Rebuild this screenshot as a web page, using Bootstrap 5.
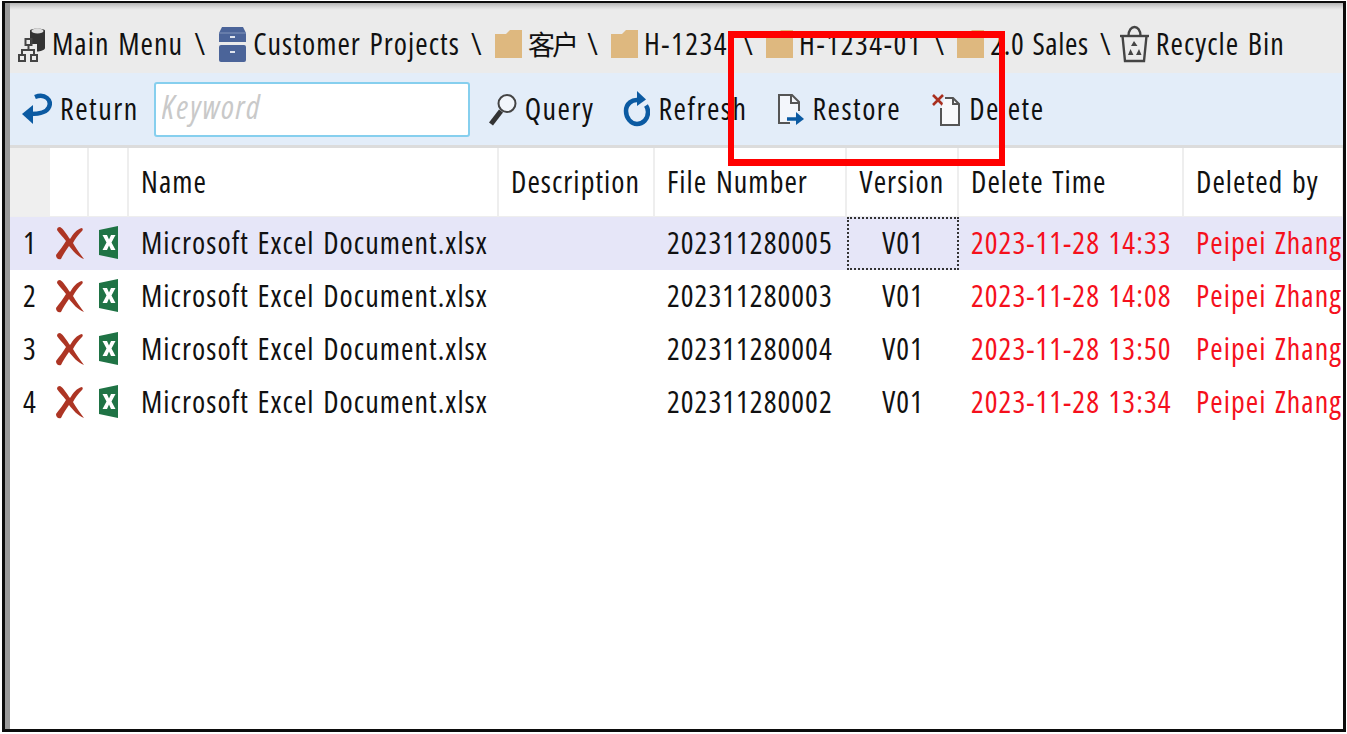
<!doctype html>
<html lang="en"><head><meta charset="utf-8"><title>Recycle Bin</title>
<link href="https://cdn.jsdelivr.net/npm/bootstrap@5.3.0/dist/css/bootstrap.min.css" rel="stylesheet">
<style>
html,body{height:100%;overflow:hidden;background:#fff}
body{font-family:"Open Sans","Noto Sans CJK SC",sans-serif;font-stretch:75%;font-size:30px;letter-spacing:1.05px;word-spacing:2px;color:#111;line-height:1}
.shell{position:relative;margin:1px 1px 2px 2px;height:731px;border:solid #0c0c0c;border-width:2px 3px 3px 3px;display:flex;flex-direction:column;overflow:hidden}
.inner{flex:1;border-left:5px solid;border-image:linear-gradient(90deg,#9a9a9a,#f0f0f0) 1;display:flex;flex-direction:column;min-height:0}
.crumbs{height:70px;flex:none;background:linear-gradient(180deg,#b5b5b5 0,#d8d8d8 4px,#ebebeb 7px);padding:22px 0 0 8px}
.crumbs .breadcrumb{--bs-breadcrumb-divider:"\\";--bs-breadcrumb-margin-bottom:0;--bs-breadcrumb-item-padding-x:11px;--bs-breadcrumb-divider-color:#111;--bs-breadcrumb-item-active-color:#111;flex-wrap:nowrap;align-items:center}
.crumbs .breadcrumb-item{display:flex;align-items:center;gap:6px;white-space:nowrap}
.crumbs .breadcrumb-item+.breadcrumb-item::before{padding-right:6px;font-size:30px}
.crumbs .breadcrumb-item:last-child::before{padding-right:1px}
.hanzi{font-size:27px;letter-spacing:-3px}
.wide-a{letter-spacing:1.5px;margin-right:3px}
.wide-b{letter-spacing:1.6px}
.tight-a{letter-spacing:.6px}
.tools{height:75px;flex:none;background:#e3edf9;border-bottom:3px solid #dcdcdc;padding-left:12px;gap:18px}
.tbtn{background:none;border:0;padding:0;color:#111;font-size:30px;font-stretch:75%;letter-spacing:1.5px;display:flex;align-items:center;gap:8px;line-height:1}
.kw{width:316px;height:55px;flex:none;margin-left:-3px;border:2px solid #86cfee;border-radius:3px;font-size:32px;font-stretch:75%;letter-spacing:1.7px;font-style:italic;padding:0 6px 6px;background:#fff}
.kw::placeholder{color:#c9c9c9;opacity:1}
.kw:focus{outline:0;box-shadow:none;border-color:#86cfee}
.push-a{margin-left:11px}
.push-b{margin-left:12px}
.push-c{margin-left:12px}
.grid{table-layout:fixed;width:1334px;margin:0;--bs-table-bg:transparent;--bs-table-color:#111;border-collapse:separate;border-spacing:0}
.grid th,.grid td{padding:0 0 0 12px;vertical-align:middle;font-weight:400;white-space:nowrap;overflow:hidden;height:53px;border:0}
.grid td{padding-bottom:2px}
.grid thead th{height:69px;border-right:2px solid #eeeeee;border-bottom:1px solid #eeeeee}
.grid thead th:first-child{background:#efefef;border-right:0}
.grid th.mid{text-align:center;padding:0}
.grid td.mid{text-align:center;padding:0 0 2px}
.grid td.ico{padding:0 0 0 5px}
.grid td.ico2{padding:0 0 2px 10px}
.grid .gone{color:#f5101c}
.grid tr.picked td{background:#e6e6f8}
.grid td.cur{outline:2px dotted #333;outline-offset:-2px}
.mark-box{position:absolute;left:723px;top:28px;width:277px;height:135px;border:solid #f00;border-width:7px 6px;pointer-events:none}
svg{display:block;flex:none}
</style></head><body>
<div class="shell"><div class="inner">
<nav class="crumbs" aria-label="path"><ol class="breadcrumb">
<li class="breadcrumb-item"><svg width="28" height="35" viewBox="0 0 28 35"><path d="M12 3.500C12 1 27 1 27 3.500V21C27 23 22 24.500 19 24.500V17H12Z" fill="#333"/><ellipse cx="19.500" cy="4" rx="6" ry="2.500" fill="#ddd"/><g fill="none" stroke="#444" stroke-width="2"><rect x="7.500" y="12" width="6" height="6"/><rect x="1" y="28" width="6" height="6"/><rect x="13" y="28" width="6" height="6"/><path d="M10.500 18V23M4 28V23H16V28"/></g></svg><span>Main Menu</span></li>
<li class="breadcrumb-item"><svg width="29" height="35" viewBox="0 0 29 35"><path d="M4 0H25L28 6V15H1V6Z" fill="#4b6499"/><rect x="1" y="18" width="27" height="17" rx="2" fill="#4b6499"/><path d="M1 6H28" stroke="#8395bb"/><rect x="12" y="9" width="5" height="2" fill="#dfe4ee"/><rect x="12" y="24" width="5" height="2" fill="#dfe4ee"/></svg><span>Customer Projects</span></li>
<li class="breadcrumb-item"><svg width="27" height="28" viewBox="0 0 27 28"><use href="#folder"/></svg><span class="hanzi">客户</span></li>
<li class="breadcrumb-item"><svg width="27" height="28" viewBox="0 0 27 28"><use href="#folder"/></svg><span class="wide-a">H-1234</span></li>
<li class="breadcrumb-item"><svg width="27" height="28" viewBox="0 0 27 28"><use href="#folder"/></svg><span class="wide-b">H-1234-01</span></li>
<li class="breadcrumb-item"><svg width="27" height="28" viewBox="0 0 27 28"><use href="#folder"/></svg><span class="tight-a">2.0 Sales</span></li>
<li class="breadcrumb-item"><svg width="31" height="38" viewBox="0 0 31 38"><g fill="none" stroke="#444" stroke-width="2.400"><path d="M1 11H30"/><path d="M3.500 11L6 36H25L27.500 11"/><path d="M9.500 11C9.500 -1 21.500 -1 21.500 11"/></g><path d="M15 16L18.500 21H12ZM20 24L22.500 30H17ZM9 30L11.500 24L14.500 30Z" fill="#444"/></svg><span>Recycle Bin</span></li>
</ol></nav>
<div class="tools d-flex align-items-center">
<button class="tbtn" type="button"><svg width="30" height="32" viewBox="0 0 30 32"><path d="M13 4C23 0 30 7 27 14C25 19 18 21 8 21" fill="none" stroke="#0b5aa2" stroke-width="4.500"/><path d="M0 21L11 12V31Z" fill="#0b5aa2"/></svg><span>Return</span></button>
<input class="form-control kw" type="text" placeholder="Keyword" aria-label="Keyword">
<button class="tbtn" type="button"><svg width="29" height="33" viewBox="0 0 29 33"><circle cx="19" cy="10.500" r="8.500" fill="#f1f5fa" stroke="#444" stroke-width="2"/><path d="M13 18L3 31" stroke="#333" stroke-width="5"/></svg><span>Query</span></button>
<button class="tbtn push-a" type="button"><svg width="27" height="36" viewBox="0 0 27 36"><path d="M17 9.500C9 7.500 3 13 3 20C3 27 8 33 14 33C20 33 25 28 25 21C25 18 24 16 23 14.500" fill="none" stroke="#0b5aa2" stroke-width="4.500"/><path d="M14 0L23 8.500L14 15Z" fill="#0b5aa2"/></svg><span>Refresh</span></button>
<button class="tbtn push-b" type="button"><svg width="27" height="31" viewBox="0 0 27 31"><path d="M13 29H2V1H15L22 8V17" fill="#f3f6fb" stroke="#555" stroke-width="2"/><path d="M14 1V9H22" fill="none" stroke="#555" stroke-width="2"/><path d="M10 25H20" stroke="#0b5aa2" stroke-width="3.500"/><path d="M19 18L27 25L19 31Z" fill="#0b5aa2"/></svg><span>Restore</span></button>
<button class="tbtn push-c" type="button"><svg width="30" height="33" viewBox="0 0 30 33"><path d="M2 2L12 12M12 2L2 12" stroke="#a92f1f" stroke-width="2.600"/><path d="M14 5H22L28 11V32H10V15" fill="#f8f9fb" stroke="#555" stroke-width="2"/><path d="M22 5V11H28" fill="none" stroke="#555" stroke-width="2"/></svg><span>Delete</span></button>
</div>
<table class="table grid"><colgroup><col style="width:40px"><col style="width:39px"><col style="width:40px"><col style="width:370px"><col style="width:156px"><col style="width:192px"><col style="width:112px"><col style="width:225px"><col style="width:160px"></colgroup>
<thead><tr><th></th><th></th><th></th><th>Name</th><th>Description</th><th>File Number</th><th class="mid">Version</th><th>Delete Time</th><th>Deleted by</th></tr></thead>
<tbody>
<tr class="picked"><td class="mid">1</td><td class="ico"><svg width="29" height="33" viewBox="0 0 29 33"><use href="#xmark"/></svg></td><td class="ico2"><svg width="19" height="33" viewBox="0 0 19 33"><use href="#xl"/></svg></td><td>Microsoft Excel Document.xlsx</td><td></td><td>202311280005</td><td class="mid cur">V01</td><td class="gone">2023-11-28 14:33</td><td class="gone">Peipei Zhang</td></tr>
<tr><td class="mid">2</td><td class="ico"><svg width="29" height="33" viewBox="0 0 29 33"><use href="#xmark"/></svg></td><td class="ico2"><svg width="19" height="33" viewBox="0 0 19 33"><use href="#xl"/></svg></td><td>Microsoft Excel Document.xlsx</td><td></td><td>202311280003</td><td class="mid">V01</td><td class="gone">2023-11-28 14:08</td><td class="gone">Peipei Zhang</td></tr>
<tr><td class="mid">3</td><td class="ico"><svg width="29" height="33" viewBox="0 0 29 33"><use href="#xmark"/></svg></td><td class="ico2"><svg width="19" height="33" viewBox="0 0 19 33"><use href="#xl"/></svg></td><td>Microsoft Excel Document.xlsx</td><td></td><td>202311280004</td><td class="mid">V01</td><td class="gone">2023-11-28 13:50</td><td class="gone">Peipei Zhang</td></tr>
<tr><td class="mid">4</td><td class="ico"><svg width="29" height="33" viewBox="0 0 29 33"><use href="#xmark"/></svg></td><td class="ico2"><svg width="19" height="33" viewBox="0 0 19 33"><use href="#xl"/></svg></td><td>Microsoft Excel Document.xlsx</td><td></td><td>202311280002</td><td class="mid">V01</td><td class="gone">2023-11-28 13:34</td><td class="gone">Peipei Zhang</td></tr>
</tbody></table>
</div><div class="mark-box"></div></div>
<svg width="0" height="0" class="position-absolute"><defs>
<g id="folder"><path d="M0 4H11L15 0H27V28H0Z" fill="#deb87f"/></g>
<g id="xmark"><path d="M5 0C8 1 12 8 15 12C18 7 22 2 27 1C28 2 28 3 27 4C23 8 20 12 18 16C21 21 25 27 29 32C23 30 18 24 14 19C11 23 8 28 6 32C3 33 1 31 1 28C4 24 8 19 11 14C8 10 4 6 2 3C2 1 3 0 5 0Z" fill="#ad3524"/></g>
<g id="xl"><path d="M0 4L19 0V33L0 29Z" fill="#1f7345"/><path d="M3.500 9H8L10 13.500L12 9H16.500L12.500 16.500L16.500 24H12L10 19.500L8 24H3.500L7.500 16.500Z" fill="#fff"/></g>
</defs></svg>
<script src="https://cdn.jsdelivr.net/npm/bootstrap@5.3.0/dist/js/bootstrap.bundle.min.js"></script>
</body></html>
